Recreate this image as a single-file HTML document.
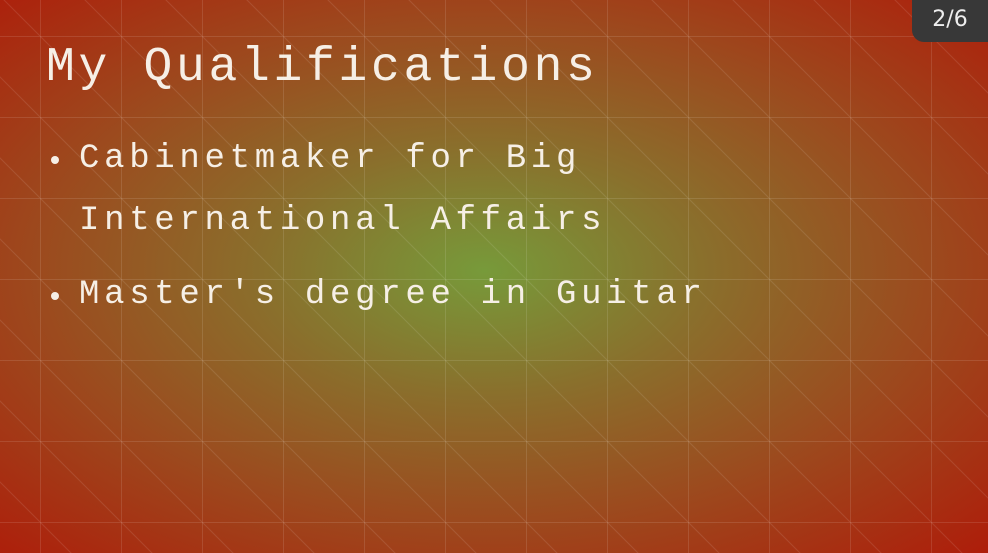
<!DOCTYPE html>
<html><head><style>
html,body{margin:0;padding:0}
body{width:988px;height:553px;overflow:hidden;position:relative;
background:radial-gradient(ellipse 75% 75% at 49% 49%,#779a3a 0%,#8a6f2c 30%,#9c4a1e 60%,#b01808 100%);
font-family:"Liberation Mono",monospace;color:#f6efe6}
svg{position:absolute;left:0;top:0}
h1{position:absolute;left:46px;top:38px;margin:0;font-weight:normal;font-size:48px;letter-spacing:3.7px;line-height:60px}
ul{position:absolute;left:79px;top:128px;margin:0;padding:0;list-style:none;font-size:34px;letter-spacing:4.7px;line-height:62px}
li{position:relative}
li::before{content:"";position:absolute;left:-28px;top:28px;width:8px;height:8px;border-radius:50%;background:#f6efe6}
.pg{position:absolute;right:0;top:0;width:76px;height:42px;background:#383838;border-bottom-left-radius:12px;color:#eee;font-family:"DejaVu Sans",sans-serif;font-size:22px;text-align:center;line-height:40px}
</style></head><body>
<svg width="988" height="553">
<defs><pattern id="p" x="40" y="36" width="81" height="81" patternUnits="userSpaceOnUse">
<path d="M0 0V81M0 0H81" stroke="rgba(255,255,255,0.22)" stroke-width="1" fill="none"/>
<path d="M0 0L81 81" stroke="rgba(255,255,255,0.1)" stroke-width="1" fill="none"/>
</pattern></defs>
<rect width="988" height="553" fill="url(#p)"/>
</svg>
<h1>My Qualifications</h1>
<ul>
<li style="margin-bottom:12px">Cabinetmaker for Big<br>International Affairs</li>
<li>Master's degree in Guitar</li>
</ul>
<div class="pg">2/6</div>
</body></html>
